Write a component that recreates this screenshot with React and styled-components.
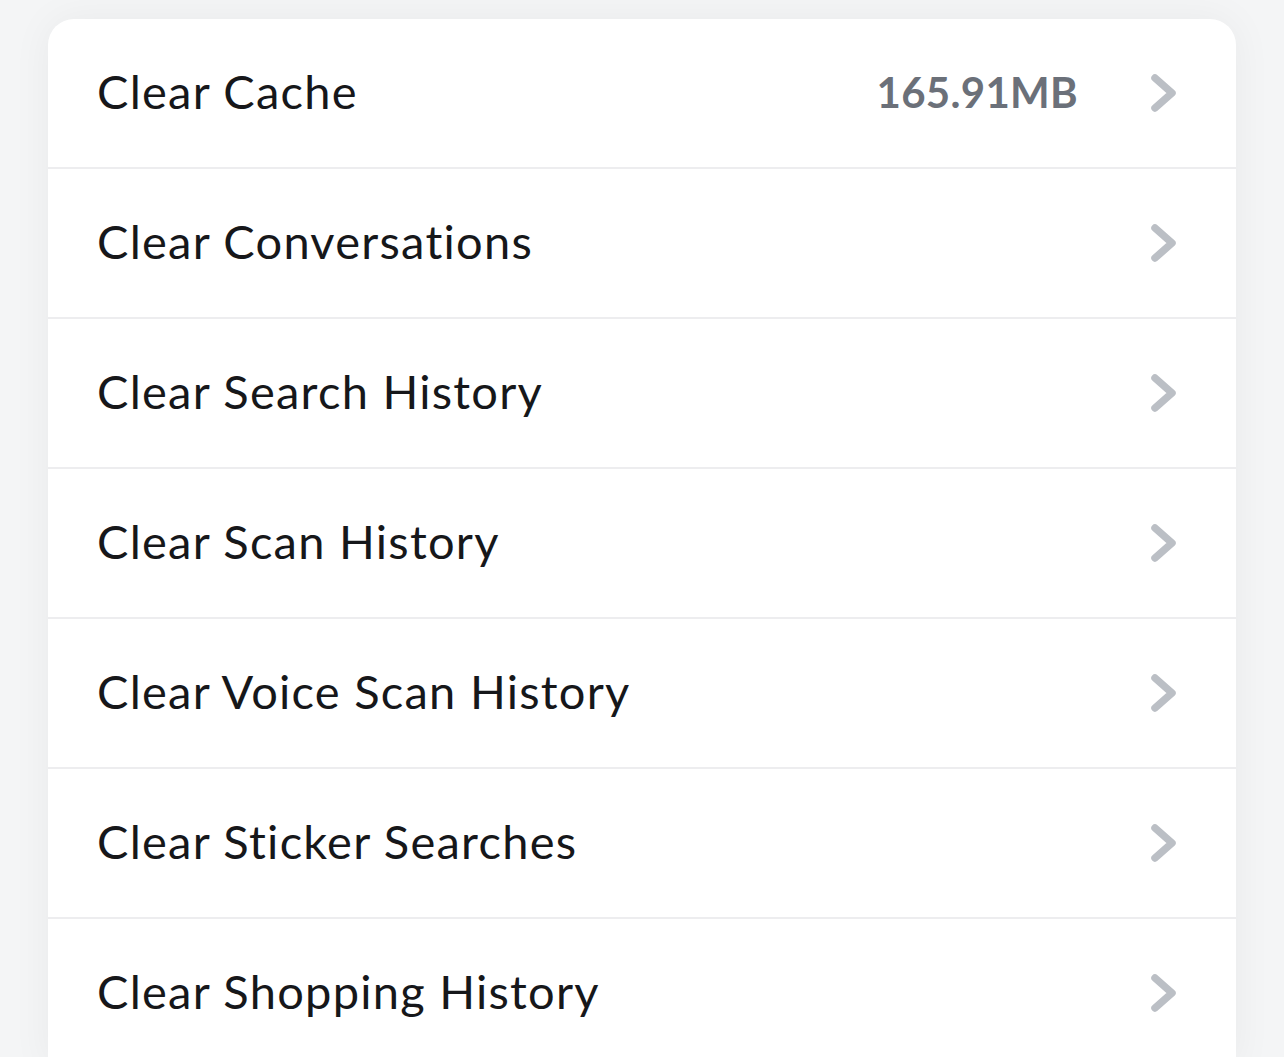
import React from 'react';
import styled, { createGlobalStyle } from 'styled-components';

const GlobalStyle = createGlobalStyle`
  html, body {
    margin: 0;
    padding: 0;
    background: #f4f5f6;
  }
  body {
    font-family: Lato, "Noto Sans", "Liberation Sans", sans-serif;
    -webkit-font-smoothing: antialiased;
  }
`;

const Page = styled.div`
  min-height: 1057px;
  padding: 19px 48px 0;
  box-sizing: border-box;
  overflow: hidden;
`;

const Card = styled.div`
  background: #ffffff;
  border-radius: 26px 26px 0 0;
  box-shadow: 0 0 40px rgba(30, 35, 45, 0.05);
  overflow: hidden;
`;

const Row = styled.div`
  display: flex;
  align-items: center;
  height: 148px;
  padding: 0 58px 0 49px;
  border-top: ${(p) => (p.$first ? 'none' : '2px solid #ededef')};
  box-sizing: content-box;
`;

const Label = styled.span`
  flex: 1;
  margin-top: -5px;
  font-size: 47px;
  font-weight: 400;
  color: #16171a;
  letter-spacing: 1.25px;
`;

const Value = styled.span`
  margin-top: -3px;
  font-size: 42px;
  font-weight: 700;
  color: #6b7079;
  margin-right: 72px;
  letter-spacing: 0.3px;
`;

const Chevron = () => (
  <svg width="28" height="40" viewBox="0 0 28 40" fill="none">
    <polyline
      points="5,5 22,20 5,35"
      stroke="#bbbfc5"
      strokeWidth="7.5"
      strokeLinecap="round"
      strokeLinejoin="round"
    />
  </svg>
);

const items = [
  { label: 'Clear Cache', value: '165.91MB' },
  { label: 'Clear Conversations' },
  { label: 'Clear Search History' },
  { label: 'Clear Scan History' },
  { label: 'Clear Voice Scan History' },
  { label: 'Clear Sticker Searches' },
  { label: 'Clear Shopping History' },
];

export default function App() {
  return (
    <>
      <GlobalStyle />
      <Page>
        <Card>
          {items.map((it, i) => (
            <Row key={it.label} $first={i === 0}>
              <Label>{it.label}</Label>
              {it.value && <Value>{it.value}</Value>}
              <Chevron />
            </Row>
          ))}
        </Card>
      </Page>
    </>
  );
}
